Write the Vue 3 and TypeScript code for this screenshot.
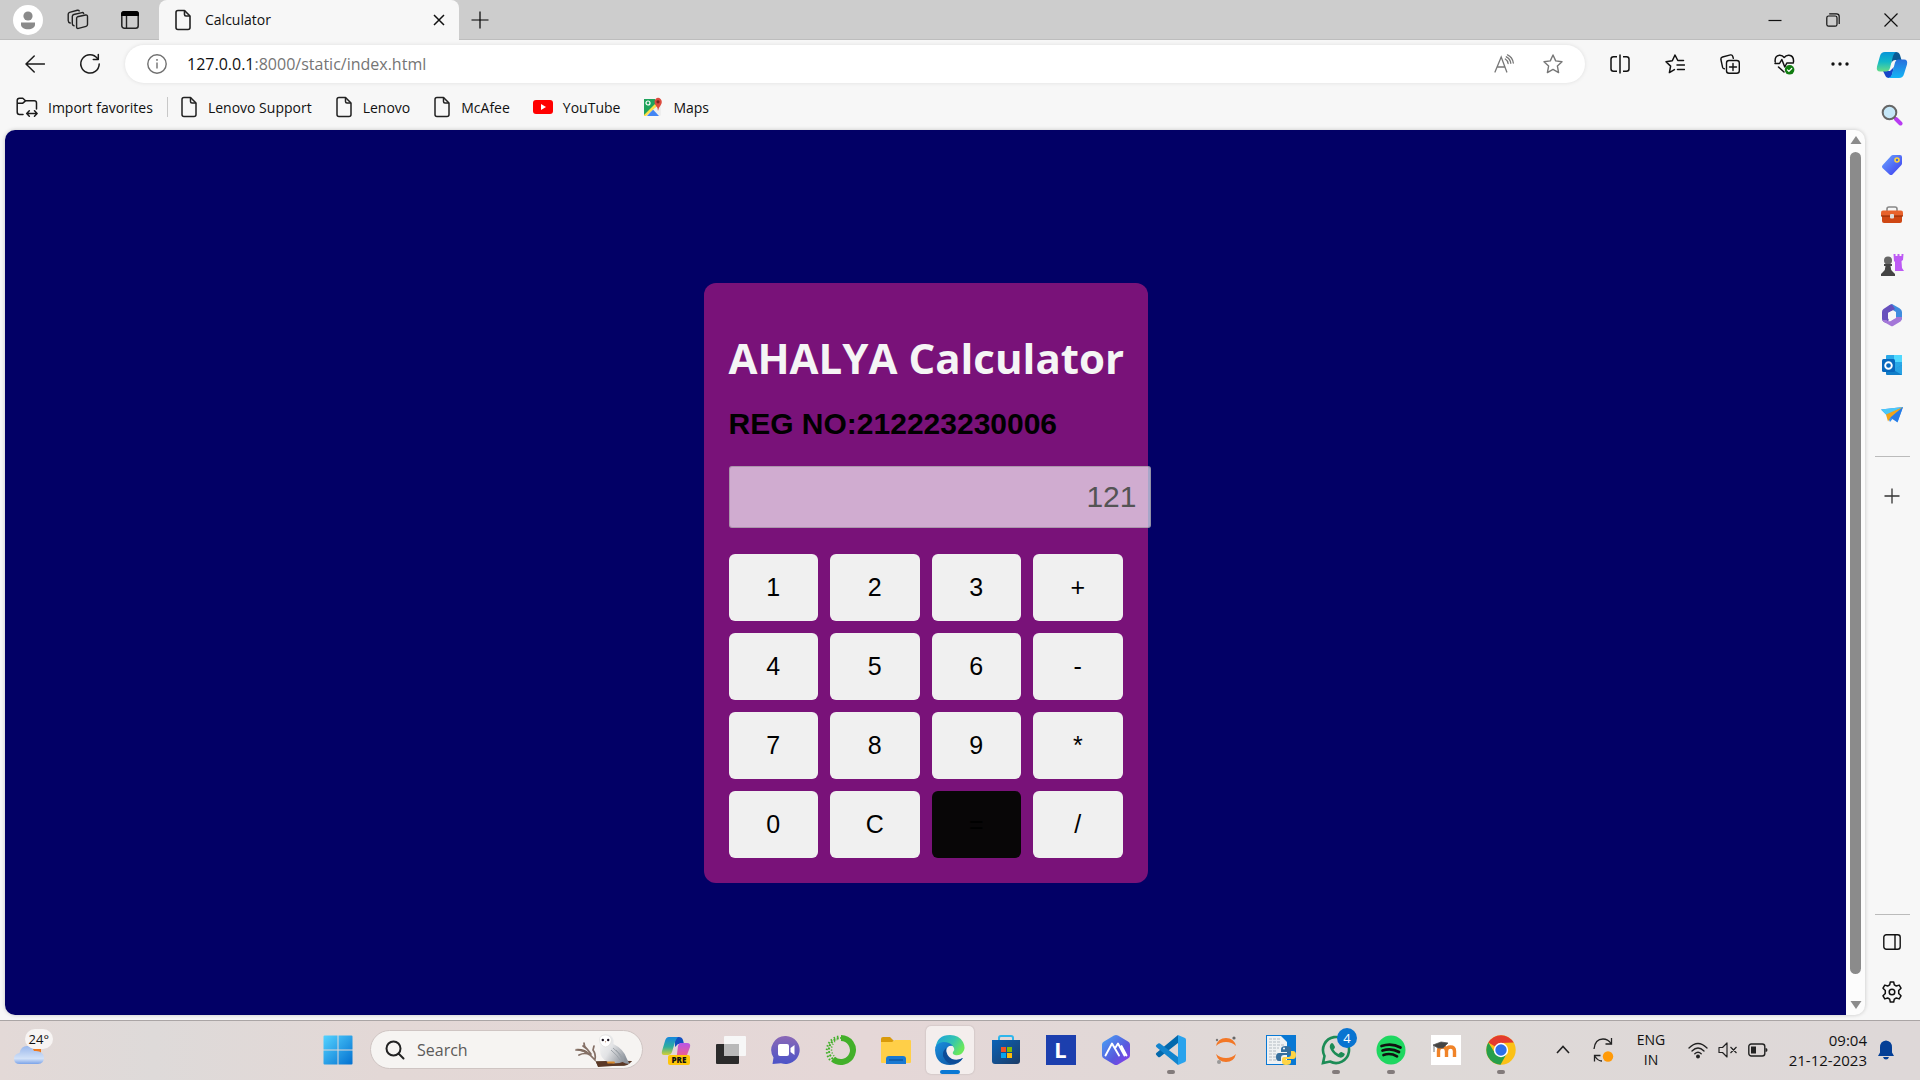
<script setup lang="ts">
import { ref } from 'vue'

interface Bookmark {
  label: string
  icon: 'doc' | 'youtube' | 'maps'
}

const bookmarks: Bookmark[] = [
  { label: 'Lenovo Support', icon: 'doc' },
  { label: 'Lenovo', icon: 'doc' },
  { label: 'McAfee', icon: 'doc' },
  { label: 'YouTube', icon: 'youtube' },
  { label: 'Maps', icon: 'maps' },
]

const keys: string[] = ['1', '2', '3', '+', '4', '5', '6', '-', '7', '8', '9', '*', '0', 'C', '=', '/']

const display = ref('121')
const stored = ref<number | null>(null)
const pending = ref('')
const fresh = ref(true)

function compute(a: number, b: number, op: string): number {
  if (op === '+') return a + b
  if (op === '-') return a - b
  if (op === '*') return a * b
  return a / b
}

function press(key: string): void {
  if (key === 'C') {
    display.value = ''
    stored.value = null
    pending.value = ''
    fresh.value = true
  } else if (/\d/.test(key)) {
    display.value = fresh.value ? key : display.value + key
    fresh.value = false
  } else {
    const current = Number(display.value)
    if (pending.value && stored.value !== null && !fresh.value) {
      display.value = String(compute(stored.value, current, pending.value))
    }
    stored.value = Number(display.value)
    pending.value = key === '=' ? '' : key
    fresh.value = true
  }
}
</script>

<template>
  <div class="desktop">
    <header class="tabstrip">
      <button class="strip-btn avatar-btn" aria-label="Profile">
        <svg width="30" height="30" viewBox="0 0 30 30"><circle cx="15" cy="15" r="15" fill="#fff" /><circle cx="15" cy="11" r="4.6" fill="#8a8a8a" /><path d="M8 17.5h14v2c0 3-3 4.800-7 4.800s-7-1.800-7-4.800z" fill="#8a8a8a" /></svg>
      </button>
      <button class="strip-btn" aria-label="Workspaces">
        <svg width="22" height="22" viewBox="0 0 22 22" fill="none" stroke="#222" stroke-width="1.400" stroke-linejoin="round" stroke-linecap="round"><path d="M10.500 7.800l8-1.800q2-.4 2 1.600v8q0 1.400-1.400 1.800l-7.600 2q-1.800.4-1.900-1.300V9.600q0-1.500.9-1.800z" /><path d="M7 16.800q-1.700-.4-1.700-2V7.400Q5.300 6 6.800 5.500L15 3.600q1.200-.2 1.700.9" /><path d="M3.200 14Q1.200 13.400 1.200 11.500V5.300q0-1.400 1.400-1.900L10.300 1.300q1.400-.3 1.900.6" /></svg>
      </button>
      <button class="strip-btn" aria-label="Tab actions">
        <svg width="20" height="20" viewBox="0 0 20 20"><rect x="1.800" y="1.800" width="16.400" height="16.400" rx="2.500" fill="none" stroke="#222" stroke-width="1.500" /><path d="M1 6V4q0-3 3-3h12q3 0 3 3v2z" fill="#000" /><path d="M6.500 6v12" stroke="#222" stroke-width="1.400" /></svg>
      </button>
      <div class="tab">
        <svg class="doc" width="18" height="22" viewBox="0 0 18 22" fill="none" stroke="#222" stroke-width="1.600" stroke-linejoin="round"><path d="M10.500 1.500H4q-2 0-2 2v15q0 2 2 2h10q2 0 2-2V7z" /><path d="M10.500 1.500V5.500q0 1.500 1.500 1.500h4" /></svg>
        <span class="tab-title">Calculator</span>
        <button class="bare" aria-label="Close tab">
          <svg width="12" height="12" viewBox="0 0 12 12" stroke="#111" stroke-width="1.500"><path d="M1 1l10 10M11 1L1 11" /></svg>
        </button>
      </div>
      <button class="bare new-tab" aria-label="New tab">
        <svg width="18" height="18" viewBox="0 0 18 18" stroke="#000" stroke-width="1.200"><path d="M9 0.500v17M0.500 9h17" /></svg>
      </button>
      <div class="window-controls">
        <button class="bare" aria-label="Minimise"><svg width="14" height="14" viewBox="0 0 14 14" stroke="#111" stroke-width="1.200"><path d="M0.500 7.500h13" /></svg></button>
        <button class="bare" aria-label="Restore"><svg width="14" height="14" viewBox="0 0 14 14" fill="none" stroke="#111" stroke-width="1.200"><rect x="0.800" y="3" width="10.200" height="10.200" rx="1.800" /><path d="M3.200 0.800H10.500q2.700 0 2.700 2.700V11" /></svg></button>
        <button class="bare" aria-label="Close"><svg width="14" height="14" viewBox="0 0 14 14" stroke="#111" stroke-width="1.200"><path d="M0.500 0.500l13 13M13.500 0.500l-13 13" /></svg></button>
      </div>
    </header>

    <div class="browser">
      <div class="column">
        <nav class="toolbar" aria-label="Browser toolbar">
          <button class="tool" aria-label="Back"><svg width="20" height="18" viewBox="0 0 20 18" fill="none" stroke="#1b1b1b" stroke-width="1.500" stroke-linecap="round" stroke-linejoin="round"><path d="M19.500 9H1M9.200 1L1 9l8.200 8" /></svg></button>
          <button class="tool" aria-label="Refresh"><svg width="22" height="22" viewBox="0 0 22 22" fill="none" stroke="#1b1b1b" stroke-width="1.500" stroke-linecap="round" stroke-linejoin="round"><path d="M18.500 5.500A9.200 9.200 0 1 0 20.200 11" /><path d="M19.300 1.500v5h-5" /></svg></button>
          <div class="address">
            <button class="bare info" aria-label="Site information"><svg width="20" height="20" viewBox="0 0 20 20" fill="none" stroke="#707070" stroke-width="1.400"><circle cx="10" cy="10" r="9.200" /><path d="M10 8.500v6" /><circle cx="10" cy="5.900" r="0.500" fill="#707070" stroke-width="1" /></svg></button>
            <div class="url" role="textbox" aria-label="Address" contenteditable="true">127.0.0.1<span class="dim">:8000/static/index.html</span></div>
            <button class="bare addr-btn" aria-label="Read aloud"><svg width="20" height="20" viewBox="0 0 20 20" fill="none" stroke="#777" stroke-width="1.300" stroke-linecap="round"><path d="M1 18L7.200 3l5.600 15M3.200 13h7.600M11.300 5q2.500 1.500 2.800 4.500M12.300 2.800q4 2 4.500 6.500M13.500 .8q5 2.200 5.800 8.200" /></svg></button>
            <button class="bare addr-btn" aria-label="Add favourite"><svg width="20" height="20" viewBox="0 0 20 20" fill="none" stroke="#777" stroke-width="1.400" stroke-linejoin="round"><path d="M10 1l2.700 5.900 6.300.8-4.600 4.400 1.200 6.500L10 15.400l-5.600 3.200 1.200-6.500L1 7.700l6.300-.8z" /></svg></button>
          </div>
          <button class="tool" aria-label="Split screen"><svg width="20" height="20" viewBox="0 0 20 20" fill="none" stroke="#111" stroke-width="1.500"><path d="M7 2.800H3.500q-2.500 0-2.500 2.500v9.400q0 2.500 2.500 2.500H7M13 2.800h3.500q2.500 0 2.500 2.500v9.400q0 2.500-2.500 2.500H13M10 .5v19" /></svg></button>
          <button class="tool" aria-label="Favourites"><svg width="20" height="20" viewBox="0 0 20 20" fill="none" stroke="#111" stroke-width="1.500" stroke-linejoin="round" stroke-linecap="round"><path d="M18.500 6.500h-5.700L10 1 7.300 6.800 1 7.700l4.600 4.400-1.200 6.500 5-3M12 11h7.500M12.500 15.500h7" /></svg></button>
          <button class="tool" aria-label="Collections"><svg width="20" height="20" viewBox="0 0 20 20" fill="none" stroke="#111" stroke-width="1.400" stroke-linecap="round"><rect x="6.500" y="6.500" width="12.800" height="12.800" rx="2.500" /><path d="M13 9.500v7M9.500 13h7M4.300 14.800q-1.400-.3-1.700-1.500L.9 5.500Q.6 3.500 2.500 3L10.500 .9q1.700-.3 2.200 1.400l.6 2" /></svg></button>
          <button class="tool" aria-label="Browser essentials"><svg width="21" height="21" viewBox="0 0 21 21" fill="none" stroke="#111" stroke-width="1.500" stroke-linecap="round" stroke-linejoin="round"><path d="M1.200 8Q.5 1.500 5.500 1.200 8.500 1 10.200 3.500 12 1 15 1.200q5 .5 4.500 6.800M1 9.500h4.500l2.300-4 3 7.500 2-4h6.500M4.500 13l5.500 5" /><circle cx="15.600" cy="15.800" r="4.800" fill="#107c10" stroke="none" /><path d="M13.400 15.900l1.500 1.500 2.800-2.900" stroke="#fff" stroke-width="1.200" /></svg></button>
          <button class="tool" aria-label="Settings and more"><svg width="18" height="6" viewBox="0 0 18 6" fill="#111"><circle cx="2" cy="3" r="1.700" /><circle cx="9" cy="3" r="1.700" /><circle cx="16" cy="3" r="1.700" /></svg></button>
        </nav>

        <nav class="bookmarks" aria-label="Favourites bar">
          <a class="bookmark" href="#">
            <svg width="22" height="20" viewBox="0 0 22 20" fill="none" stroke="#1b1b1b" stroke-width="1.500" stroke-linejoin="round" stroke-linecap="round"><path d="M7 17.500H3.500Q1.200 17.500 1.200 15V3.500Q1.200 1.200 3.500 1.200h3.300L9.500 3.800h8.700q2.300 0 2.300 2.200v6M1.200 6.300h5.300L9.500 3.800M11 16.500h10M13.300 13.800l-2.600 2.700 2.600 2.700M18.500 13.800l2.600 2.700-2.600 2.700" /></svg>
            Import favorites
          </a>
          <span class="rule"></span>
          <a v-for="item in bookmarks" :key="item.label" class="bookmark" href="#">
            <svg v-if="item.icon === 'doc'" width="18" height="22" viewBox="0 0 18 22" fill="none" stroke="#222" stroke-width="1.500" stroke-linejoin="round"><path d="M10.500 1.500H4q-2 0-2 2v15q0 2 2 2h10q2 0 2-2V7z" /><path d="M10.500 1.500V5.500q0 1.500 1.500 1.500h4" /></svg>
            <svg v-else-if="item.icon === 'youtube'" width="20" height="14" viewBox="0 0 20 14"><rect width="20" height="14" rx="3" fill="#f00" /><path d="M8 4l5 3-5 3z" fill="#fff" /></svg>
            <svg v-else width="20" height="20" viewBox="0 0 20 20"><rect x="1" y="2" width="17" height="17" rx="1.500" fill="#eee" /><path d="M1 2h11l3 6L3 18H1z" fill="#1fa35c" /><path d="M4 19l6-6.500 6 6.500z" fill="#4285f4" /><path d="M1 18L12 7l2 2L3 19H1z" fill="#ffde48" /><circle cx="5" cy="6" r="2" fill="none" stroke="#fff" stroke-width="1.200" /><path d="M15 14q-.5-4-2.500-6-2-3.500 0-5.800Q15-.5 17.800 2.200q2 2.500 0 5.800Q15.500 11 15 14z" fill="#dc4b3e" /><circle cx="15" cy="4.800" r="1.600" fill="#7b231e" /></svg>
            {{ item.label }}
          </a>
        </nav>

        <div class="viewport">
          <main class="page">
            <section class="calculator">
              <h1>AHALYA Calculator</h1>
              <h2>REG NO:212223230006</h2>
              <input v-model="display" class="display" type="text" aria-label="Result" disabled />
              <div class="keypad">
                <button v-for="key in keys" :key="key" class="key" :class="{ equals: key === '=' }" @click="press(key)">{{ key }}</button>
              </div>
            </section>
          </main>
          <div class="scrollbar" aria-hidden="true">
            <svg width="12" height="10" viewBox="0 0 12 10"><path d="M6 1l5.500 8H.5z" fill="#8b8b8b" /></svg>
            <span class="thumb"></span>
            <svg width="12" height="10" viewBox="0 0 12 10"><path d="M6 9l5.500-8H.5z" fill="#8b8b8b" /></svg>
          </div>
        </div>
      </div>

      <aside class="sidebar" aria-label="Sidebar">
        <button class="side" aria-label="Copilot">
          <svg width="32" height="28" viewBox="0 0 32 28">
            <defs>
              <linearGradient id="cpA" x1="0" y1="0" x2="0" y2="1"><stop offset="0" stop-color="#0795d8" /><stop offset=".5" stop-color="#12b8c8" /><stop offset="1" stop-color="#67dc87" /></linearGradient>
              <linearGradient id="cpB" x1="0" y1="0" x2="0" y2="1"><stop offset="0" stop-color="#2a6fdc" /><stop offset="1" stop-color="#14b5f5" /></linearGradient>
            </defs>
            <path d="M15 1h5q3 0 4 3l1.500 5h-6q-3 0-4 3z" fill="#0b5a94" />
            <path d="M7 20h7l4-4-2 8q-1 3-3 3-3 0-4-3z" fill="#1746c8" />
            <path d="M9 1h11q-2 1-3 4l-3 12q-1 3.500-4 3.500H4q-4 0-3-5L4 5q1-4 5-4z" fill="url(#cpA)" />
            <path d="M22 8.500h6q4 0 3 5l-3 9.500q-1 4-5 4H12q3-.5 4-4l3-11.500q.8-3 3-3z" fill="url(#cpB)" />
          </svg>
        </button>
        <button class="side" aria-label="Search">
          <svg width="22" height="22" viewBox="0 0 22 22"><path d="M13 13l2.500 2.500" stroke="#555" stroke-width="2.500" /><path d="M15 15l4.500 4.500" stroke="#b83bf2" stroke-width="4" stroke-linecap="round" /><circle cx="8.500" cy="8.500" r="6.800" fill="#c5e7f8" stroke="#666" stroke-width="2" /></svg>
        </button>
        <button class="side" aria-label="Shopping">
          <svg width="22" height="22" viewBox="0 0 22 22"><defs><linearGradient id="tagG" x1="0" y1="0" x2="1" y2="1"><stop offset="0" stop-color="#6ba8ff" /><stop offset="1" stop-color="#3c38ee" /></linearGradient></defs><path d="M12 1h7q2 0 2 2v6.500q0 1-1 2l-8.500 9q-1.500 1.200-3 0L1.500 14q-1.200-1.300 0-2.800L10 2q1-1 2-1z" fill="url(#tagG)" /><circle cx="16" cy="6" r="2" fill="#4768dc" stroke="#ffd43a" stroke-width="1.600" /></svg>
        </button>
        <button class="side" aria-label="Tools">
          <svg width="24" height="20" viewBox="0 0 24 20"><path d="M7 6V4q0-2 2-2h6q2 0 2 2v2" fill="none" stroke="#888" stroke-width="1.600" /><path d="M2 9h20v7q0 2-2 2H4q-2 0-2-2z" fill="#cf4714" /><path d="M3 5.500h18q2 0 2 2V11H1V7.500q0-2 2-2z" fill="#e8622c" /><path d="M1 11h22" stroke="#8b2805" stroke-width="1" /><rect x="10" y="9" width="4" height="4.500" rx="1" fill="#ddd" /></svg>
        </button>
        <button class="side" aria-label="Games">
          <svg width="24" height="24" viewBox="0 0 24 24"><path d="M13.500 1h2v2h2V1h2v2h2V1h2l-.5 6-1.500 1 .5 7 2 3h-9V9l-1-1z" fill="#bd5af4" /><circle cx="8" cy="7.500" r="4" fill="#666" /><path d="M4 11h8v2h-1.500q0 4 2.500 6l2 2v2H1v-2l2-2q2.500-2 2.500-6H4z" fill="#444" /></svg>
        </button>
        <button class="side" aria-label="Microsoft 365">
          <svg width="22" height="24" viewBox="0 0 22 24"><path d="M11 1l7.500 4.300Q21 7 21 9v6q0 1.500-1.500 2.500L15 14V9L7 4q2-3 4-3z" fill="#3f8cde" /><path d="M7 3L2.500 6Q1 7 1 9v7q0 2 2 3l2 1 3-3q-1-1-1-2.500V10l7-4-3-4.500Q9 1 7 3z" fill="#6750bd" /><path d="M3 19l7 4q1 .5 2 0l7.500-4.500Q21 17 21 14l-6 0-5 4q-3 1-4.500-1L1.500 17q.5 1.300 1.500 2z" fill="#a477d8" /><path d="M11 8l4 2v5l-4 2-4-2v-5z" fill="#f7f7f7" /></svg>
        </button>
        <button class="side" aria-label="Outlook">
          <svg width="22" height="22" viewBox="0 0 22 22"><rect x="5" y="1" width="16" height="14" rx="1" fill="#29a8e8" /><path d="M13 1h8v7h-8z" fill="#50d9ff" /><path d="M5 11l8 5 8-5v10H6q-1 0-1-1z" fill="#127ec9" /><path d="M21 11v10L12 15.500z" fill="#28a3e5" /><rect x="1" y="5" width="13" height="13" rx="1.500" fill="#0868bd" /><circle cx="7.500" cy="11.500" r="3.300" fill="none" stroke="#fff" stroke-width="1.900" /></svg>
        </button>
        <button class="side" aria-label="Drop">
          <svg width="22" height="18" viewBox="0 0 22 18"><path d="M0 3.500L22 1 16.500 16.500 11.500 13 9 16 6 9.500z" fill="#3991f0" /><path d="M0 3.500L22 1 5.500 9z" fill="#4cc8f8" /><path d="M22 1L5 8.500l2 7 2.500-4z" fill="#f2a418" /><path d="M22 1l-5.500 15-7-4.500z" fill="#277be5" /></svg>
        </button>
        <span class="side-rule top"></span>
        <button class="side" aria-label="Customise"><svg width="16" height="16" viewBox="0 0 16 16" stroke="#333" stroke-width="1.300"><path d="M8 .5v15M.5 8h15" /></svg></button>
        <span class="side-rule bottom"></span>
        <button class="side" aria-label="Toggle sidebar"><svg width="18" height="16" viewBox="0 0 18 16" fill="none" stroke="#111" stroke-width="1.400"><rect x=".8" y=".8" width="16.400" height="14.400" rx="2.500" /><path d="M12 1v14" /></svg></button>
        <button class="side" aria-label="Settings"><svg width="22" height="22" viewBox="0 0 22 22" fill="none" stroke="#111" stroke-width="1.500" stroke-linejoin="round"><path d="M9.300 1h3.400l.6 2.900 2 1.100 2.900-.9L20 7.200 17.700 9.600v2.800L20 14.800l-1.800 3.100-2.900-.9-2 1.100-.6 2.900H9.300l-.6-2.900-2-1.100-2.900.9L2 14.800l2.300-2.400V9.600L2 7.200l1.800-3.100 2.900.9 2-1.100z" /><circle cx="11" cy="11" r="2.800" /></svg></button>
      </aside>
    </div>

    <footer class="taskbar">
      <div class="weather">
        <div class="weather-art">
          <svg width="32" height="22" viewBox="0 0 32 22"><defs><linearGradient id="cl" x1="0" y1="0" x2="0" y2="1"><stop offset="0" stop-color="#9ab8ec" /><stop offset=".7" stop-color="#d3e2f8" /><stop offset="1" stop-color="#7ba3e8" /></linearGradient></defs><path d="M20 6h8v6h-8z" fill="#ee7a20" /><path d="M7 21q-6 0-6-5.500Q1 11 6.500 10 8 3 14 3q5 0 7 5 9-1 10 6.500 0 6.500-6 6.500z" fill="url(#cl)" /></svg>
          <span class="temp">24°</span>
        </div>
      </div>

      <nav class="apps" aria-label="Taskbar">
        <button class="app" aria-label="Start">
          <svg width="30" height="30" viewBox="0 0 30 30"><defs><linearGradient id="win" x1="0" y1="0" x2="1" y2="1"><stop offset="0" stop-color="#54d3ff" /><stop offset="1" stop-color="#0370d0" /></linearGradient></defs><path d="M1.500 .5h13v14H.5v-13q0-1 1-1zM15.500 .5h13q1 0 1 1v13h-14zM.5 15.500h14v14h-13q-1 0-1-1zM15.500 15.500h14v13q0 1-1 1h-13z" fill="url(#win)" /></svg>
        </button>
        <label class="search">
          <svg width="20" height="20" viewBox="0 0 20 20" fill="none" stroke="#222" stroke-width="2" stroke-linecap="round"><circle cx="8.500" cy="8.500" r="7" /><path d="M13.500 13.500l5 5" /></svg>
          <input type="text" placeholder="Search" aria-label="Search" />
          <svg class="owl" width="60" height="34" viewBox="0 0 60 34">
            <defs><linearGradient id="owlBody" x1="0" y1="0" x2="1" y2=".6"><stop offset="0" stop-color="#fafafa" /><stop offset=".5" stop-color="#e2e3e5" /><stop offset="1" stop-color="#8f959d" /></linearGradient></defs>
            <path d="M1 16q9-1 14 4l7 8h36q-3 4-8 5H24q-2-5-6-9-6-5-17-8z" fill="#76604f" />
            <path d="M2 17q8 0 13 4l6 6M5 22q6-3 11 0M10 10q0 4 3 6l4 5M21 26q1-5-2-9l1-4M9 13l4 3" stroke="#857066" stroke-width="1.700" fill="none" stroke-linecap="round" />
            <path d="M22 29q15-2 36-1l-5 4-29 2z" fill="#5a3826" />
            <path d="M26 12q-2-3-1-6 2-5 7-5 6 0 7.500 6 0 3 0 4 10 5 13 14l3 6q-4 0-7-2-4 2-11 1-9-2-11-9-1-5-.5-9z" fill="url(#owlBody)" />
            <path d="M39 15q6 4 9 11M42 17q6 5 8 11M37 17q7 6 9 10" stroke="#9ba0a7" stroke-width=".9" fill="none" />
            <path d="M25.500 7q0-5 6-5 5 0 6 5-1 6-6 7-5-1-6-7z" fill="#fff" stroke="#d8d6d3" stroke-width=".6" />
            <circle cx="28.800" cy="7" r="1.200" fill="#1b1320" /><circle cx="34.200" cy="7" r="1.200" fill="#1b1320" />
            <path d="M31 8h1.200l-.6 2.600z" fill="#c7a38b" />
            <path d="M34 29.500h6" stroke="#d98a2b" stroke-width="1.800" stroke-linecap="round" />
          </svg>
        </label>
        <button class="app" aria-label="Copilot preview">
          <svg width="30" height="30" viewBox="0 0 30 30"><defs><linearGradient id="c1" x1="0" y1="0" x2="0" y2="1"><stop offset="0" stop-color="#1687dd" /><stop offset=".55" stop-color="#2fae9c" /><stop offset="1" stop-color="#d5cf32" /></linearGradient><linearGradient id="c2" x1="0" y1="0" x2="0" y2="1"><stop offset="0" stop-color="#b856e8" /><stop offset="1" stop-color="#f8617e" /></linearGradient></defs><path d="M14 2h4q3 0 4 3l1 4h-6l-3 3z" fill="#134fc0" /><path d="M8 2h9q-2 2-3 5l-3 10q-1 3-4 3H3q-3 0-2-4L4 6q1-4 4-4z" fill="url(#c1)" /><path d="M19 8h7q4 0 3 4l-3 8q-1 3-4 3h-9q3-1 3-4l1-8q1-3 2-3z" fill="url(#c2)" /><rect x="7" y="20" width="22" height="10" rx="2" fill="#ffc60a" /><text x="18" y="28" text-anchor="middle" font-family="Open Sans, sans-serif" font-weight="800" font-size="8" fill="#111">PRE</text></svg>
        </button>
        <button class="app" aria-label="Task view">
          <svg width="30" height="30" viewBox="0 0 30 30"><rect y="9" width="23" height="20" rx="1" fill="#2b2b2b" /><rect x="8" y="1" width="22" height="20" rx="1" fill="#f7f7f7" /><path d="M8 9h15v12H8z" fill="#b9b9b9" /></svg>
        </button>
        <button class="app" aria-label="Chat">
          <svg width="30" height="30" viewBox="0 0 30 30"><defs><linearGradient id="ch" x1="0" y1="0" x2="0" y2="1"><stop offset="0" stop-color="#8b68b6" /><stop offset="1" stop-color="#4b53c8" /></linearGradient></defs><path d="M15 1a14 14 0 1 1-5 27.200L1.500 29l1-6.500A14 14 0 0 1 15 1z" fill="url(#ch)" /><rect x="7" y="9" width="11" height="12" rx="2" fill="#fff" /><path d="M19.500 13l4-3v10l-4-3z" fill="#fff" /></svg>
        </button>
        <button class="app" aria-label="Anaconda">
          <svg width="32" height="32" viewBox="0 0 32 32" fill="none" stroke="#43b02a"><path d="M16 4a12 12 0 1 1-8 21" stroke-width="6" /><path d="M8 25A12 12 0 0 1 16 4" stroke-width="2" stroke-dasharray="2 1.500" /><path d="M5 26A14.500 14.500 0 0 1 14 2.500" stroke-width="2" stroke-dasharray="1.500 2" /><path d="M9 22A10.500 10.500 0 0 1 12 6" stroke-width="1.500" stroke-dasharray="1 2" /></svg>
        </button>
        <button class="app" aria-label="File Explorer">
          <svg width="32" height="32" viewBox="0 0 32 32"><path d="M1 5q0-2 2-2h7l4 4-3 4H1z" fill="#d99a0b" /><path d="M1 8h11l3-2h15q1 0 1 1v21q0 1-1 1H2q-1 0-1-1z" fill="#ffcf48" /><path d="M6 30v-5q0-3 3-3h14q3 0 3 3v5z" fill="#1979d2" /><path d="M9 26h14" stroke="#0a4f98" stroke-width="1.200" /></svg>
        </button>
        <button class="app active" aria-label="Edge">
          <svg width="32" height="32" viewBox="0 0 32 32"><defs><linearGradient id="e1" x1="0" y1="0" x2="1" y2=".5"><stop offset="0" stop-color="#1a9fe0" /><stop offset=".6" stop-color="#34c4b0" /><stop offset="1" stop-color="#6ae85c" /></linearGradient><linearGradient id="e2" x1="0" y1="0" x2="1" y2="1"><stop offset="0" stop-color="#1b8fdd" /><stop offset="1" stop-color="#0b4d9c" /></linearGradient></defs><path d="M1.500 14Q3 1 16 1q9 0 13 7 3 6 0 10-3 4-8 3-3-1-2-3 2-2 1-4-2-4-8-4-7 0-10.500 4z" fill="url(#e1)" /><path d="M1 16Q1 9 9 8q7 0 10 4-6-1-7 5 0 7 7 9 5 1 10-2-4 7-13 7Q2 31 1 16z" fill="url(#e2)" /><path d="M12 14q-5 5-2 10 3 6 9 6 6-1 10-6-6 3-11 1-6-3-6-11z" fill="#0c4c98" /></svg>
          <span class="running"></span>
        </button>
        <button class="app" aria-label="Store">
          <svg width="30" height="30" viewBox="0 0 30 30"><defs><linearGradient id="st" x1="0" y1="0" x2="1" y2="1"><stop offset="0" stop-color="#0a63b8" /><stop offset="1" stop-color="#1c3c66" /></linearGradient></defs><path d="M8 6V3q0-2 2-2h10q2 0 2 2v3" fill="none" stroke="#2fb6ec" stroke-width="2" /><path d="M1 5h28v21q0 3-3 3H4q-3 0-3-3z" fill="url(#st)" /><path d="M10 12h5v5h-5z" fill="#f35325" /><path d="M16 12h5v5h-5z" fill="#81bc06" /><path d="M10 18h5v5h-5z" fill="#05a6f0" /><path d="M16 18h5v5h-5z" fill="#ffba08" /></svg>
        </button>
        <button class="app" aria-label="Lenovo Vantage"><span class="tile-l">L</span></button>
        <button class="app" aria-label="Development tool">
          <svg width="30" height="32" viewBox="0 0 30 32"><defs><linearGradient id="hx" x1="0" y1="0" x2="1" y2="1"><stop offset="0" stop-color="#47a6f5" /><stop offset=".6" stop-color="#5857dd" /><stop offset="1" stop-color="#9238ed" /></linearGradient></defs><path d="M13 1.500q2-1 4 0l10 6q2 1 2 3v11q0 2-2 3l-10 6q-2 1-4 0l-10-6q-2-1-2-3v-11q0-2 2-3z" fill="url(#hx)" /><path d="M4.500 21.500L11 9.500l7 12M14.500 13.500L17 9.500l6.500 12M20.500 12l5 9.500" fill="none" stroke="#fff" stroke-width="1.900" stroke-linecap="round" stroke-linejoin="round" /></svg>
        </button>
        <button class="app" aria-label="Visual Studio Code">
          <svg width="32" height="32" viewBox="0 0 32 32"><path d="M23 1l7 3q1 .5 1 2v20q0 1.500-1 2l-7 3z" fill="#29a3ed" /><path d="M23 1v8L5 23q-1 .5-1.800 0L1.300 21q-1-1 0-2z" fill="#0369ad" /><path d="M23 31v-8L5 9.500q-1-.5-1.800 0L1.300 11q-1 1 0 2z" fill="#1284ce" /></svg>
          <span class="running"></span>
        </button>
        <button class="app" aria-label="Jupyter">
          <svg width="32" height="32" viewBox="0 0 32 32"><path d="M6 12Q8 4 16 4t10 8q-4-4-10-4T6 12zM6 20q2 8 10 8t10-8q-4 4-10 4T6 20z" fill="#f37726" /><circle cx="24" cy="4" r="1.600" fill="#666" /><circle cx="7" cy="6" r="1.200" fill="#777" /><circle cx="9" cy="28" r="2" fill="#999" /></svg>
        </button>
        <button class="app" aria-label="Python IDLE">
          <svg width="30" height="30" viewBox="0 0 30 30"><path d="M0 0h30v30H0z" fill="#0878d4" /><path d="M1 1h14l6 6v22H1z" fill="#eef1f3" /><path d="M3 4h11M3 7h12M3 10h15M3 13h10M3 16h8M3 19h8M3 22h9M3 25h10" stroke="#b3bbc2" stroke-width="1" stroke-dasharray="3 1" /><path d="M20 11q-5 0-5 3v3h6v1h-8q-3 0-3 4t3 4h2v-3q0-3 3-3h5q2 0 2-2v-4q0-3-5-3z" fill="#356f9f" /><path d="M20 30q5 0 5-3v-2h-5v-1h7q3 0 3-4t-3-4h-2v3q0 3-3 3h-4q-2 0-2 2v3q0 3 4 3z" fill="#ffd445" /><circle cx="18" cy="13.500" r="1" fill="#fff" /></svg>
        </button>
        <button class="app" aria-label="WhatsApp">
          <svg width="30" height="30" viewBox="0 0 30 30"><path d="M3.500 21A13 13 0 1 1 9 26.500L2 28z" fill="none" stroke="#1c8c56" stroke-width="2.600" /><path d="M9 10q2-4 4 0l1 2q0 1-1.500 2.500 2 3.500 5 4.500 2-2.500 3-2l3 1.500q1 1-1 3-3 3-9-2-6-6-4.500-9.500z" fill="#1c8c56" /></svg>
          <span class="count">4</span>
          <span class="running"></span>
        </button>
        <button class="app" aria-label="Spotify">
          <svg width="30" height="30" viewBox="0 0 30 30"><circle cx="15" cy="15" r="14.500" fill="#1ed760" /><path d="M5.500 11q10-3.500 19 1.500M6.500 15.500q9-3 16.500 1.500M7.500 20q7-2.500 13.500 1.300" fill="none" stroke="#111" stroke-width="2.700" stroke-linecap="round" /></svg>
          <span class="running"></span>
        </button>
        <button class="app" aria-label="Moodle">
          <svg width="30" height="30" viewBox="0 0 30 30"><path d="M0 0h30v30H0z" fill="#fff" /><path d="M7.500 22v-6q0-4 4-4t4 4v6M15.500 16q0-4 4-4t4 4v6" fill="none" stroke="#f08328" stroke-width="3.400" /><path d="M2 10l8-3 7 1-5 5-5 0zM3 10v7" fill="#444" stroke="#555" stroke-width=".8" /></svg>
        </button>
        <button class="app" aria-label="Chrome">
          <svg width="30" height="30" viewBox="0 0 30 30"><circle cx="15" cy="15" r="14.700" fill="#fbc116" /><path d="M15 15L2.300 7.600A14.700 14.700 0 0 1 27.700 7.600L15 8z" fill="#e33b2e" /><path d="M2.300 7.600A14.700 14.700 0 0 0 14.500 29.700L20.500 19 9 18z" fill="#269f4a" /><circle cx="15" cy="15" r="7.200" fill="#fff" /><circle cx="15" cy="15" r="5.700" fill="#2c70e8" /></svg>
          <span class="running"></span>
        </button>
      </nav>

      <div class="tray">
        <button class="bare chevron" aria-label="Hidden icons"><svg width="14" height="9" viewBox="0 0 14 9" fill="none" stroke="#222" stroke-width="1.600"><path d="M1 8l6-6.500L13 8" /></svg></button>
        <button class="bare sync" aria-label="Updates"><svg width="22" height="26" viewBox="0 0 22 26" fill="none" stroke="#222" stroke-width="1.300"><path d="M2 12Q3 2 11 2q5 0 8 4.500M19.500 1v6h-6M10 24q-4 0-7-4.500M2.500 24.500v-6h6" /><circle cx="16" cy="19.500" r="5.200" fill="#ff9a08" stroke="none" /></svg></button>
        <button class="bare lang"><span>ENG</span><span>IN</span></button>
        <button class="bare status" aria-label="Network, volume and battery">
          <svg width="20" height="18" viewBox="0 0 20 18" fill="none" stroke="#222" stroke-width="1.300" stroke-linecap="round"><path d="M1 7q9-9 18 0M4 10q6-6 12 0M6.800 12.800q3.200-3.200 6.400 0" /><circle cx="10" cy="15.500" r="1.300" fill="#222" /></svg>
          <svg width="20" height="18" viewBox="0 0 20 18" fill="none" stroke="#222" stroke-width="1.200" stroke-linejoin="round"><path d="M1 6.500h3.500L9 2v14l-4.500-4.500H1zM12.500 6l6 6M18.500 6l-6 6" /></svg>
          <svg width="20" height="14" viewBox="0 0 20 14"><rect x=".8" y="1" width="16" height="12" rx="2.500" fill="none" stroke="#222" stroke-width="1.400" /><path d="M3 3.500h5v7H3z" fill="#222" /><path d="M17.500 5q2 0 2 2t-2 2z" fill="#222" /></svg>
        </button>
        <button class="bare clock"><span>09:04</span><span>21-12-2023</span></button>
        <button class="bare bell" aria-label="Notifications"><svg width="18" height="20" viewBox="0 0 18 20" fill="#043f96"><path d="M9 .5q6 .5 6 7v5l2 3.500H1l2-3.500v-5q0-6.500 6-7zM6 17h6q-.8 2.500-3 2.500T6 17z" /></svg></button>
      </div>
    </footer>
  </div>
</template>

<style>
body {
  margin: 0;
}
</style>

<style scoped>
.desktop {
  display: flex;
  flex-direction: column;
  min-height: 100vh;
  background: #f7f7f7;
  color: #111;
  font-family: 'Open Sans', 'Noto Sans', sans-serif;
  font-size: 14px;
}

.desktop * {
  box-sizing: border-box;
}

button {
  margin: 0;
  padding: 0;
  border: 0;
  background: none;
  color: inherit;
  font: inherit;
}

svg {
  display: block;
  flex: none;
}

.bare {
  display: flex;
  align-items: center;
  justify-content: center;
}

/* Tab strip */
.tabstrip {
  display: flex;
  align-items: center;
  height: 40px;
  background: #cdcdcd;
  box-shadow: inset 0 -1px #bdbdbd;
}

.strip-btn {
  display: flex;
  justify-content: center;
  width: 52px;
}

.avatar-btn {
  width: 56px;
  margin-right: -4px;
}

.tab {
  display: flex;
  align-items: center;
  align-self: stretch;
  width: 300px;
  margin-left: 3px;
  padding: 0 14px 0 15px;
  border-radius: 8px 8px 0 0;
  background: #f7f7f7;
}

.tab-title {
  flex: 1;
  margin-left: 13px;
  line-height: 20px;
}

.new-tab {
  width: 42px;
}

.window-controls {
  display: flex;
  margin-left: auto;
}

.window-controls .bare {
  width: 58px;
  height: 40px;
}

/* Browser frame */
.browser {
  display: flex;
  flex: 1;
}

.column {
  display: flex;
  flex: 1;
  flex-direction: column;
  min-width: 0;
}

.toolbar {
  display: flex;
  align-items: center;
  height: 48px;
  padding-left: 7px;
}

.tool {
  display: flex;
  align-items: center;
  justify-content: center;
  width: 55px;
  height: 40px;
}

.address {
  display: flex;
  flex: 1;
  align-items: center;
  height: 38px;
  margin: 0 7px 0 8px;
  padding: 0 8px 0 22px;
  border-radius: 19px;
  background: #fff;
  box-shadow: 0 0 4px #0000001a;
}

.url {
  flex: 1;
  margin-left: 20px;
  outline: none;
  color: #111;
  font-size: 16px;
  line-height: 24px;
}

.dim {
  color: #757575;
}

.addr-btn {
  width: 49px;
}

.bookmarks {
  display: flex;
  align-items: center;
  height: 42px;
  padding: 0 0 4px 16px;
}

.bookmark {
  display: flex;
  align-items: center;
  gap: 10px;
  margin-right: 23px;
  color: #111;
  text-decoration: none;
}

.rule {
  width: 1px;
  height: 20px;
  margin: 0 12px 0 -9px;
  background: #c8c8c8;
}

.viewport {
  display: flex;
  flex: 1;
  margin: 0 2px 5px 5px;
  overflow: hidden;
  border-radius: 10px;
  background: #fcfcfc;
  box-shadow: 0 0 4px #00000033;
}

.page {
  display: flex;
  flex: 1;
  align-items: center;
  justify-content: center;
  padding-top: 20px;
  background: #020066;
  font-family: 'Liberation Sans', Arial, sans-serif;
}

.scrollbar {
  display: flex;
  flex-direction: column;
  align-items: center;
  width: 19px;
  padding: 5px 0;
}

.thumb {
  flex: 1;
  width: 11px;
  margin: 7px 0 26px;
  border-radius: 6px;
  background: #8b8b8b;
}

/* Calculator */
.calculator {
  width: 444px;
  padding: 25px;
  border-radius: 12px;
  background: #791279;
}

h1 {
  margin: 26px 0;
  color: #f5f5f5;
  font-family: 'Open Sans', sans-serif;
  font-size: 42px;
  font-weight: 700;
  line-height: 47px;
  white-space: nowrap;
}

h2 {
  margin: 0 0 26px;
  color: #000;
  font-size: 30px;
  line-height: 33px;
}

.display {
  display: block;
  width: 422px;
  height: 62px;
  margin-bottom: 26px;
  padding: 0 13px;
  border: 1px solid #76767666;
  border-radius: 3px;
  background: #ffffffa6;
  color: #545454;
  font-family: inherit;
  font-size: 30px;
  text-align: right;
}

.keypad {
  display: grid;
  grid-template-columns: repeat(4, 1fr);
  gap: 12px;
}

.key {
  height: 67px;
  border-radius: 6px;
  background: #f0f0f0;
  color: #000;
  font-size: 25px;
}

.equals {
  background: #080607;
}

/* Sidebar */
.sidebar {
  display: flex;
  flex-direction: column;
  align-items: center;
  width: 53px;
  padding: 0 3px 3px 0;
}

.side {
  display: flex;
  align-items: center;
  justify-content: center;
  width: 50px;
  height: 50px;
}

.side-rule {
  width: 35px;
  height: 1px;
  background: #bbb;
}

.side-rule.top {
  margin: 16px 0 14px;
}

.side-rule.bottom {
  margin: auto 0 2px;
}

/* Taskbar */
.taskbar {
  display: flex;
  align-items: stretch;
  height: 60px;
  border-top: 1px solid #aaa5a5;
  background: linear-gradient(90deg, #e3d9d7, #dedad9 8%, #e3d8d6 20%, #e5d7d7 45%, #ded9d7 70%, #ded8d8);
}

.weather {
  flex: 1;
  padding: 8px 0 0 13px;
}

.weather-art {
  position: relative;
  width: 42px;
  padding-top: 14px;
}

.temp {
  position: absolute;
  top: 0;
  right: 2px;
  padding: 0 4px;
  border-radius: 10px;
  background: #f7f4f3;
  font-size: 13px;
  line-height: 20px;
}

.apps {
  display: flex;
  align-items: center;
  padding-bottom: 2px;
}

.app {
  position: relative;
  display: flex;
  align-items: center;
  justify-content: center;
  width: 55px;
  height: 48px;
}

.active {
  width: 48px;
  margin: 0 4px 0 3px;
  border-radius: 5px;
  background: #f4eeed;
  box-shadow: 0 0 2px #0003;
}

.running {
  position: absolute;
  bottom: 0;
  left: 50%;
  width: 8px;
  height: 4px;
  margin-left: -4px;
  border-radius: 2px;
  background: #827b7b;
}

.active .running {
  width: 20px;
  margin-left: -10px;
  background: #0878d4;
}

.count {
  position: absolute;
  top: 2px;
  right: 6px;
  width: 20px;
  height: 20px;
  border-radius: 50%;
  background: #0874d1;
  color: #fff;
  font-size: 13px;
  line-height: 20px;
}

.tile-l {
  width: 30px;
  height: 30px;
  background: #1c3fae;
  color: #fff;
  font-family: 'Noto Sans', sans-serif;
  font-size: 22px;
  font-weight: 700;
  line-height: 28px;
}

.search {
  display: flex;
  align-items: center;
  width: 273px;
  height: 39px;
  margin: 0 5px;
  padding: 0 8px 0 14px;
  border: 1px solid #cfc5c3;
  border-radius: 20px;
  background: #f6f4f2;
}

.search input {
  flex: 1;
  width: 0;
  min-width: 0;
  padding: 0 0 0 12px;
  border: 0;
  outline: 0;
  background: none;
  font-family: inherit;
  font-size: 16px;
}

.search input::placeholder {
  color: #5c5a59;
  opacity: 1;
}

.tray {
  display: flex;
  align-items: center;
  width: 392px;
  padding: 0 25px 2px 15px;
  font-size: 14px;
  line-height: 20px;
}

.chevron,
.sync {
  width: 40px;
  height: 40px;
}

.lang {
  flex-direction: column;
  width: 56px;
}

.status {
  gap: 10px;
  margin-left: 9px;
}

.clock {
  flex-direction: column;
  align-items: flex-end;
  margin-left: auto;
  font-size: 15px;
}

.bell {
  margin-left: 10px;
}
</style>
